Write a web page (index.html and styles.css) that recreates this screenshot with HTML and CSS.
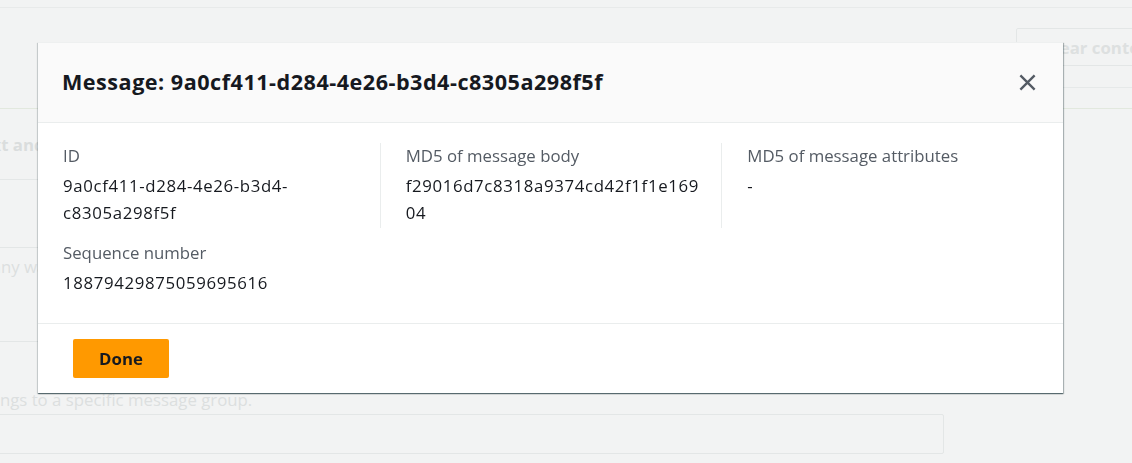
FILE: index.html
```html
<!DOCTYPE html>
<html lang="en">
<head>
<meta charset="utf-8">
<title>Message details</title>
<link rel="stylesheet" href="styles.css">
</head>
<body>
<div class="page">
  <div class="page-top"></div>
  <div class="page-actions">
    <button class="btn-ghost" type="button">Clear content</button>
  </div>
  <div class="page-sub"></div>
  <div class="page-rule"></div>
  <div class="page-content">
    <div class="panel-head"><span>Message text and attributes</span></div>
    <div class="textarea">Enter text in any way you like</div>
    <div class="help">a message belongs to a specific message group.</div>
    <div class="input"></div>
  </div>
</div>

<div class="overlay">
  <div class="modal" role="dialog" aria-labelledby="modal-title">
    <div class="modal-header">
      <h2 class="modal-title" id="modal-title">Message: 9a0cf411-d284-4e26-b3d4-c8305a298f5f</h2>
      <button class="modal-close" type="button" aria-label="Close">
        <svg width="19" height="19" viewBox="0 0 16 16" aria-hidden="true"><path d="M2 2l12 12M14 2L2 14" stroke="#545b64" stroke-width="2" fill="none"/></svg>
      </button>
    </div>
    <div class="modal-body">
      <div class="kv-grid">
        <div class="kv">
          <div class="kv-label">ID</div>
          <div class="kv-value">9a0cf411-d284-4e26-b3d4-c8305a298f5f</div>
        </div>
        <div class="kv kv-divided">
          <div class="kv-label">MD5 of message body</div>
          <div class="kv-value">f29016d7c8318a9374cd42f1f1e16904</div>
        </div>
        <div class="kv kv-divided">
          <div class="kv-label">MD5 of message attributes</div>
          <div class="kv-value">-</div>
        </div>
        <div class="kv kv-last">
          <div class="kv-label">Sequence number</div>
          <div class="kv-value">18879429875059695616</div>
        </div>
      </div>
    </div>
    <div class="modal-footer">
      <button class="btn-primary" type="button">Done</button>
    </div>
  </div>
</div>
</body>
</html>
```

FILE: styles.css
```css
* { box-sizing: border-box; }

html, body {
  margin: 0;
  height: 100%;
}

body {
  background: #f2f3f3;
  font-family: "Open Sans", "Noto Sans", sans-serif;
  font-size: 16.8px;
  color: #16191f;
  overflow: hidden;
  position: relative;
}

/* faded page behind the dialog */
.page {
  width: 1132px;
}

.page-top {
  height: 8px;
  border-bottom: 1px solid #e8eaea;
}

.page-actions {
  display: flex;
  justify-content: flex-end;
  margin-right: -60px;
  padding-top: 20px;
}

.btn-ghost {
  width: 176px;
  height: 38px;
  padding: 0 0 0 27px;
  text-align: left;
  background: transparent;
  border: 1px solid #e3e6e6;
  border-radius: 2px;
  font-family: inherit;
  font-size: 16.8px;
  font-weight: 700;
  color: #dde0e0;
}

.page-sub {
  height: 22px;
  margin-left: 900px;
  border-bottom: 1px solid #e6e9e9;
}

.page-rule {
  height: 21px;
  border-bottom: 1px solid #e2e8de;
}

.page-content {
  margin-left: -121px;
  width: 1065px;
}

.panel-head {
  height: 71px;
  display: flex;
  align-items: center;
  padding-left: 19px;
  border-bottom: 1px solid #e4e7e7;
  font-weight: 700;
  color: #dadddd;
}

.textarea {
  margin-top: 67px;
  height: 95px;
  border: 1px solid #e3e6e6;
  border-radius: 2px;
  padding: 6px 12px;
  line-height: 26px;
  color: #dcdfdf;
}

.help {
  margin-top: 45px;
  margin-bottom: 1px;
  line-height: 26px;
  color: #dcdfdf;
}

.input {
  height: 40px;
  border: 1px solid #e3e6e6;
  border-radius: 2px;
}

/* dialog */
.overlay {
  position: fixed;
  inset: 0;
  padding: 42px 0 0 38px;
}

.modal {
  width: 1025px;
  background: #ffffff;
  box-shadow: 0 1px 1px 0 rgba(0, 28, 36, 0.45),
              1px 1px 1px 0 rgba(0, 28, 36, 0.25),
              -1px 1px 1px 0 rgba(0, 28, 36, 0.12);
}

.modal-header {
  height: 81px;
  display: flex;
  align-items: center;
  justify-content: space-between;
  padding: 0 26px 2px 24px;
  background: #fafafa;
  border-top: 1px solid #eef0f0;
  border-bottom: 1px solid #eaeded;
}

.modal-title {
  margin: 0;
  font-size: 21.6px;
  font-weight: 700;
  line-height: 30px;
  letter-spacing: 0.5px;
  color: #16191f;
}

.modal-close {
  display: flex;
  padding: 0;
  margin-top: 2px;
  border: none;
  background: none;
  cursor: pointer;
}

.modal-body {
  padding: 20px 0 27px;
}

.kv-grid {
  display: grid;
  grid-template-columns: repeat(3, minmax(0, 1fr));
  row-gap: 12px;
}

.kv {
  min-height: 85px;
  padding: 0 17px 0 25px;
  overflow-wrap: anywhere;
}

.kv-divided {
  border-left: 1px solid #eaeded;
}

.kv-label {
  line-height: 26px;
  margin-bottom: 3px;
  color: #545b64;
}

.kv-value {
  line-height: 27px;
  letter-spacing: 0.65px;
  color: #16191f;
}

.kv-last {
  min-height: 0;
}

.modal-footer {
  border-top: 1px solid #eaeded;
  padding: 15px 35px;
}

.btn-primary {
  width: 96px;
  height: 39px;
  padding: 0;
  background: #ff9900;
  border: none;
  border-radius: 2px;
  font-family: inherit;
  font-size: 16.8px;
  font-weight: 700;
  color: #16191f;
  cursor: pointer;
}
```
